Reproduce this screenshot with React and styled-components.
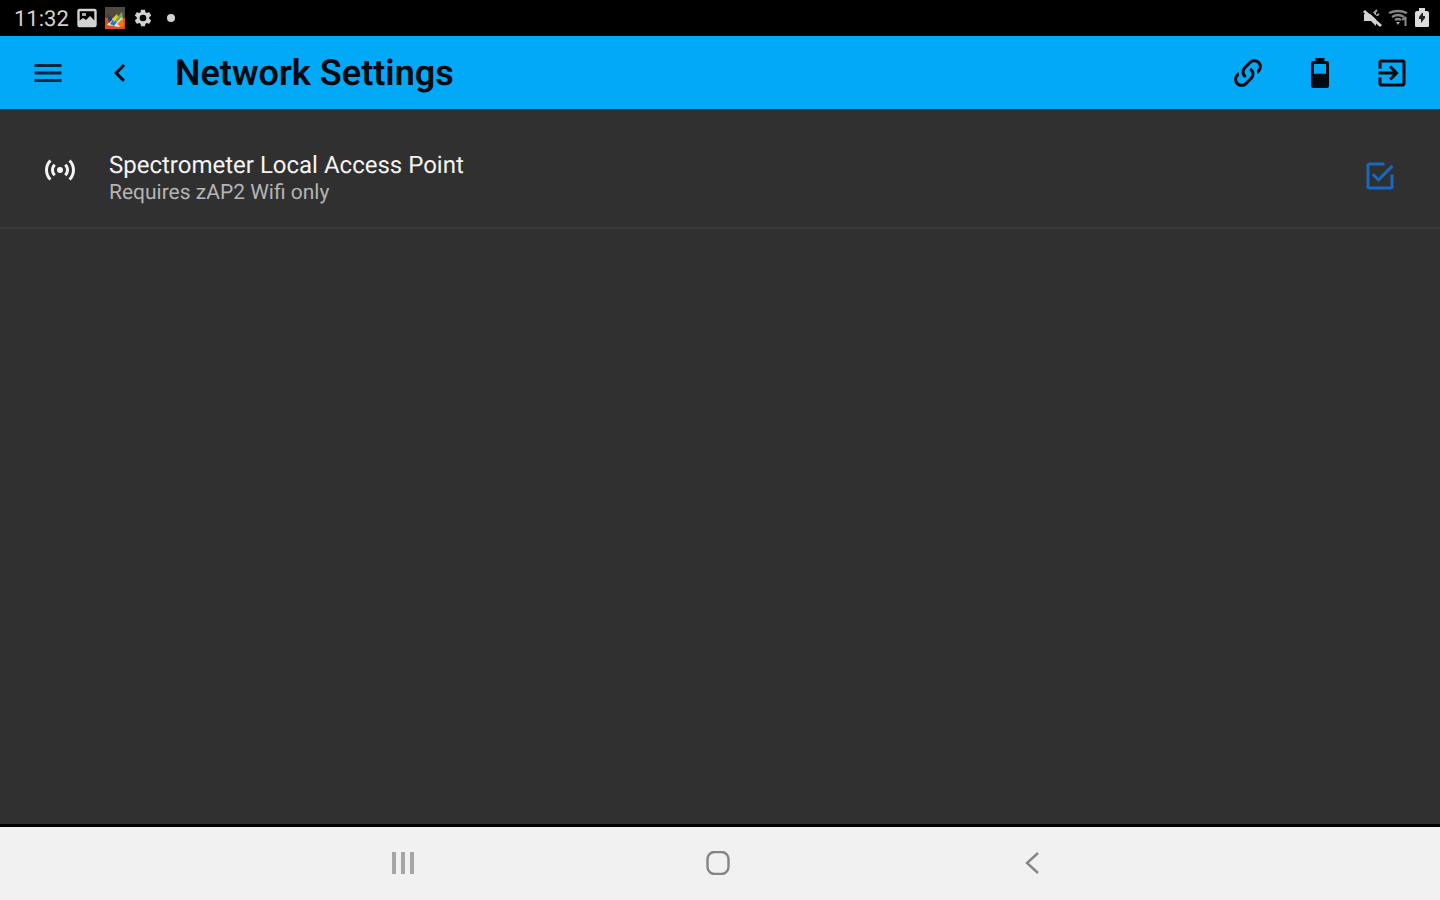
import React from "react";
import styled, { createGlobalStyle } from "styled-components";

const GlobalStyle = createGlobalStyle`
  * { box-sizing: border-box; }
  body { margin: 0; background: #303030; font-family: Roboto, "Liberation Sans", sans-serif; text-rendering: geometricPrecision; }
  button { margin: 0; padding: 0; border: 0; background: none; font: inherit; color: inherit; }
`;

const Screen = styled.div`
  display: flex;
  flex-direction: column;
  min-height: 100vh;
  background: #303030;
`;

const StatusBar = styled.div`
  display: flex;
  align-items: center;
  justify-content: space-between;
  height: 36px;
  padding: 0 10px 0 14px;
  background: #000;
  color: #d2d2d2;
`;

const StatusGroup = styled.div`
  display: flex;
  align-items: center;
  gap: ${(p) => p.$gap}px;
`;

const Clock = styled.time`
  padding-top: 4px;
  font-size: 22px;
  line-height: 32px;
`;

const AppBar = styled.header`
  display: flex;
  align-items: center;
  justify-content: space-between;
  height: 73px;
  padding: 0 12px;
  background: #02a9f7;
  color: #020a10;
`;

const BarGroup = styled.div`
  display: flex;
  align-items: center;
`;

const IconButton = styled.button`
  display: grid;
  place-items: center;
  width: 72px;
  height: 72px;
  opacity: ${(p) => (p.$muted ? 0.8 : 1)};
  cursor: pointer;
`;

const Title = styled.h1`
  margin: 0 0 0 19px;
  font-size: 36px;
  line-height: 48px;
  font-weight: 600;
`;

const Content = styled.main`
  flex: 1;
`;

const SettingRow = styled.label`
  display: flex;
  align-items: center;
  height: 120px;
  padding: 16px 42px 0;
  border-bottom: 2px solid #383838;
  cursor: pointer;
`;

const RowIcon = styled.span`
  display: flex;
  padding-bottom: 12px;
  color: #f4f4f4;
`;

const RowText = styled.span`
  display: flex;
  flex: 1;
  flex-direction: column;
  padding: 6px 0 0 31px;
`;

const RowTitle = styled.span`
  font-size: 24px;
  line-height: 28px;
  color: #f4f4f4;
`;

const RowNote = styled.span`
  font-size: 21px;
  line-height: 28px;
  color: #b4b4b4;
`;

const CheckArea = styled.span`
  display: grid;
  color: #1768c2;
  > * { grid-area: 1 / 1; }
`;

const CheckInput = styled.input`
  appearance: none;
  width: 36px;
  height: 36px;
  margin: 0;
  cursor: pointer;
  &:not(:checked) + svg path:last-child { visibility: hidden; }
`;

const CheckIcon = styled.svg`
  width: 36px;
  height: 36px;
  fill: currentColor;
  pointer-events: none;
`;

const NavBar = styled.nav`
  display: flex;
  justify-content: center;
  gap: 243px;
  height: 76px;
  border-top: 3px solid #000;
  background: #f1f1f1;
  color: #858585;
  padding-right: 5px;
`;

const Icon = ({ size = 36, d }) => (
  <svg width={size} height={size} viewBox="0 0 24 24" fill="currentColor" aria-hidden="true">
    <path d={d} />
  </svg>
);

const paths = {
  menu: "M3,6H21V8H3V6M3,11H21V13H3V11M3,16H21V18H3V16Z",
  back: "M15.41,16.58L10.83,12L15.41,7.41L14,6L8,12L14,18L15.41,16.58Z",
  link: "M10.59,13.41C11,13.8 11,14.44 10.59,14.83C10.2,15.22 9.56,15.22 9.17,14.83C7.22,12.88 7.22,9.71 9.17,7.76V7.76L12.71,4.22C14.66,2.27 17.83,2.27 19.78,4.22C21.73,6.17 21.73,9.34 19.78,11.29L18.29,12.78C18.3,11.96 18.17,11.14 17.89,10.36L18.36,9.88C19.54,8.71 19.54,6.81 18.36,5.64C17.19,4.46 15.29,4.46 14.12,5.64L10.59,9.17C9.41,10.34 9.41,12.24 10.59,13.41M13.41,9.17C13.8,8.78 14.44,8.78 14.83,9.17C16.78,11.12 16.78,14.29 14.83,16.24V16.24L11.29,19.78C9.34,21.73 6.17,21.73 4.22,19.78C2.27,17.83 2.27,14.66 4.22,12.71L5.71,11.22C5.7,12.04 5.83,12.86 6.11,13.65L5.64,14.12C4.46,15.29 4.46,17.19 5.64,18.36C6.81,19.54 8.71,19.54 9.88,18.36L13.41,14.83C14.59,13.66 14.59,11.76 13.41,10.59C13,10.2 13,9.56 13.41,9.17Z",
  battery: "M16,12.5H8V6H16M16.67,4H15V2H9V4H7.33A1.33,1.33 0 0,0 6,5.33V20.67C6,21.4 6.6,22 7.33,22H16.67A1.33,1.33 0 0,0 18,20.67V5.33C18,4.6 17.4,4 16.67,4Z",
  exit: "M19,3H5C3.89,3 3,3.89 3,5V9H5V5H19V19H5V15H3V19A2,2 0 0,0 5,21H19A2,2 0 0,0 21,19V5C21,3.89 20.1,3 19,3M10.08,15.58L11.5,17L16.5,12L11.5,7L10.08,8.41L12.67,11H3V13H12.67L10.08,15.58Z",
  accessPoint: "M4.93,4.93C3.12,6.74 2,9.24 2,12C2,14.76 3.12,17.26 4.93,19.07L6.34,17.66C4.89,16.22 4,14.22 4,12C4,9.79 4.89,7.78 6.34,6.34L4.93,4.93M19.07,4.93L17.66,6.34C19.11,7.79 20,9.79 20,12C20,14.22 19.11,16.22 17.66,17.66L19.07,19.07C20.88,17.26 22,14.76 22,12C22,9.24 20.88,6.74 19.07,4.93M7.76,7.76C6.67,8.85 6,10.35 6,12C6,13.65 6.67,15.15 7.76,16.24L9.17,14.83C8.45,14.11 8,13.11 8,12C8,10.89 8.45,9.89 9.17,9.17L7.76,7.76M16.24,7.76L14.83,9.17C15.55,9.89 16,10.89 16,12C16,13.11 15.55,14.11 14.83,14.83L16.24,16.24C17.33,15.15 18,13.65 18,12C18,10.35 17.33,8.85 16.24,7.76M12,10A2,2 0 0,0 10,12A2,2 0 0,0 12,14A2,2 0 0,0 14,12A2,2 0 0,0 12,10Z",
  gear: "M19.43 12.98c.04-.32.07-.64.07-.98s-.03-.66-.07-.98l2.11-1.65c.19-.15.24-.42.12-.64l-2-3.46c-.12-.22-.39-.3-.61-.22l-2.49 1c-.52-.4-1.08-.73-1.69-.98l-.38-2.65C14.46 2.18 14.25 2 14 2h-4c-.25 0-.46.18-.49.42l-.38 2.65c-.61.25-1.17.59-1.69.98l-2.49-1c-.23-.09-.49 0-.61.22l-2 3.46c-.13.22-.07.49.12.64l2.11 1.65c-.04.32-.07.65-.07.98s.03.66.07.98l-2.11 1.65c-.19.15-.24.42-.12.64l2 3.46c.12.22.39.3.61.22l2.49-1c.52.4 1.08.73 1.69.98l.38 2.65c.03.24.24.42.49.42h4c.25 0 .46-.18.49-.42l.38-2.65c.61-.25 1.17-.59 1.69-.98l2.49 1c.23.09.49 0 .61-.22l2-3.46c.12-.22.07-.49-.12-.64l-2.11-1.65zM12 16a4 4 0 1 1 0-8 4 4 0 0 1 0 8z",
};

const PhotoIcon = () => (
  <svg width="20" height="20" viewBox="0 0 20 20" aria-hidden="true">
    <rect x="1.5" y="2" width="17" height="16" rx="1" fill="none" stroke="#d2d2d2" strokeWidth="2.4" />
    <path d="M2 17V13l4-3 3 2 4-4 5 5v4z" fill="#d2d2d2" />
    <path d="M5 5h4v3H5z" fill="#a5a5a5" />
  </svg>
);

const AppBadgeIcon = () => (
  <svg width="20" height="22" viewBox="0 0 20 22" aria-hidden="true">
    <rect width="20" height="11" fill="#504a43" />
    <rect y="11" width="20" height="11" fill="#d9501e" />
    <path d="M2 18L7 11l4 3 6-9 1 13-4 2z" fill="#efe8c9" />
    <path d="M2 7l6 5-4 4z" fill="#253b70" />
    <path d="M5 17l3-5 4 3-3 4z" fill="#2577d8" />
    <path d="M10 13l7-8v5l-5 5z" fill="#63b647" />
    <path d="M7 12l5-5 1 3-4 5z" fill="#f2c72d" />
    <path d="M12 17l5-5 2 5-2 4z" fill="#ef7425" />
  </svg>
);

const MuteIcon = () => (
  <svg width="20" height="20" viewBox="0 0 20 20" aria-hidden="true">
    <path d="M2 6h4l8-1v13l-5-5H2z" fill="#d2d2d2" />
    <path d="M11 6l4-4M14 8l3-2" stroke="#a5a5a5" strokeWidth="2" />
    <path d="M5 1l15 14" stroke="#000" strokeWidth="3" />
    <path d="M2 3l17 15" stroke="#d2d2d2" strokeWidth="3" />
  </svg>
);

const WifiIcon = () => (
  <svg width="20" height="20" viewBox="0 0 20 20" fill="none" aria-hidden="true">
    <path d="M1 5q9-4 18 0M4 9q6-4 12 0M7 12q3-2 6 0" stroke="#858585" strokeWidth="2.4" />
    <path d="M8 14h4l-2 3z" fill="#a5a5a5" />
    <path d="M17.5 18V9M14 12l4-3" stroke="#8d8d8d" strokeWidth="2" />
  </svg>
);

const ChargeIcon = () => (
  <svg width="16" height="20" viewBox="0 0 16 20" aria-hidden="true">
    <path d="M5 0h6v3h2q2 0 2 2v13q0 1-1 1H2q-1 0-1-1V5q0-2 2-2h2z" fill="#dcdcdc" />
    <path d="M8 5L5 9v2h2v4l4-5V8H9V5z" fill="#222" />
  </svg>
);

export default function App() {
  return (
    <Screen>
      <GlobalStyle />
      <StatusBar>
        <StatusGroup $gap={8}>
          <Clock>11:32</Clock>
          <PhotoIcon />
          <AppBadgeIcon />
          <Icon size={20} d={paths.gear} />
          <svg width="20" height="20" viewBox="0 0 20 20" aria-hidden="true">
            <circle cx="10" cy="10" r="4" fill="#d2d2d2" />
          </svg>
        </StatusGroup>
        <StatusGroup $gap={6}>
          <MuteIcon />
          <WifiIcon />
          <ChargeIcon />
        </StatusGroup>
      </StatusBar>
      <AppBar>
        <BarGroup>
          <IconButton type="button" aria-label="Menu" $muted><Icon d={paths.menu} /></IconButton>
          <IconButton type="button" aria-label="Back"><Icon d={paths.back} /></IconButton>
          <Title>Network Settings</Title>
        </BarGroup>
        <BarGroup>
          <IconButton type="button" aria-label="Connection"><Icon d={paths.link} /></IconButton>
          <IconButton type="button" aria-label="Battery"><Icon d={paths.battery} /></IconButton>
          <IconButton type="button" aria-label="Exit"><Icon d={paths.exit} /></IconButton>
        </BarGroup>
      </AppBar>
      <Content>
        <SettingRow>
          <RowIcon><Icon d={paths.accessPoint} /></RowIcon>
          <RowText>
            <RowTitle>Spectrometer Local Access Point</RowTitle>
            <RowNote>Requires zAP2 Wifi only</RowNote>
          </RowText>
          <CheckArea>
            <CheckInput type="checkbox" defaultChecked />
            <CheckIcon viewBox="0 0 24 24" aria-hidden="true">
              <path d="M19,19H5V5H15V3H5C3.89,3 3,3.89 3,5V19A2,2 0 0,0 5,21H19A2,2 0 0,0 21,19V11H19Z" />
              <path d="M7.91,10.08L6.5,11.5L11,16L21,6L19.59,4.58L11,13.17L7.91,10.08Z" />
            </CheckIcon>
          </CheckArea>
        </SettingRow>
      </Content>
      <NavBar aria-label="System">
        <IconButton type="button" aria-label="Recent apps">
          <svg width="24" height="24" viewBox="0 0 24 24" aria-hidden="true">
            <path d="M3 1v22M12 1v22M21 1v22" stroke="#a6a6a6" strokeWidth="4" />
          </svg>
        </IconButton>
        <IconButton type="button" aria-label="Home">
          <svg width="24" height="24" viewBox="0 0 24 24" fill="none" aria-hidden="true">
            <rect x="1.5" y="1" width="21" height="22" rx="7" stroke="currentColor" strokeWidth="2.4" />
          </svg>
        </IconButton>
        <IconButton type="button" aria-label="Back">
          <svg width="24" height="24" viewBox="0 0 24 24" fill="none" aria-hidden="true">
            <path d="M17 2L6 12l11 10" stroke="currentColor" strokeWidth="2.4" />
          </svg>
        </IconButton>
      </NavBar>
    </Screen>
  );
}
